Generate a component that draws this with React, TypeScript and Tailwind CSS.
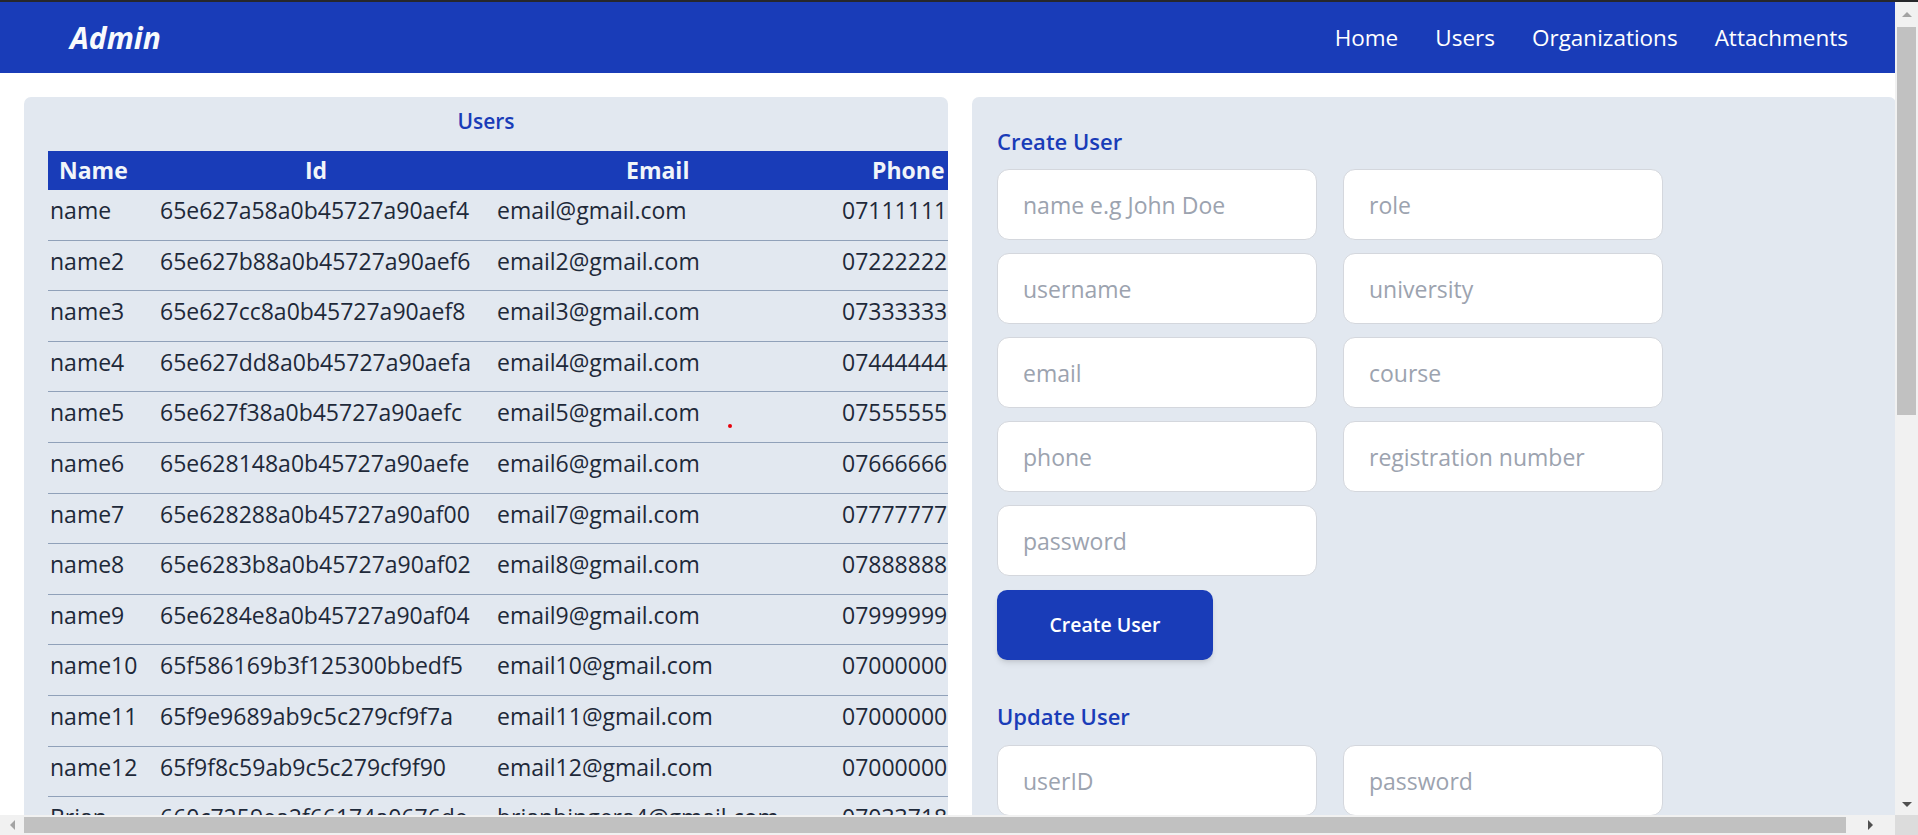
import React from 'react';

type User = { name: string; id: string; email: string; phone: string; role: string };

const USERS: User[] = [
  { name: 'name', id: '65e627a58a0b45727a90aef4', email: 'email@gmail.com', phone: '0711111111', role: 'student' },
  { name: 'name2', id: '65e627b88a0b45727a90aef6', email: 'email2@gmail.com', phone: '0722222222', role: 'student' },
  { name: 'name3', id: '65e627cc8a0b45727a90aef8', email: 'email3@gmail.com', phone: '0733333333', role: 'student' },
  { name: 'name4', id: '65e627dd8a0b45727a90aefa', email: 'email4@gmail.com', phone: '0744444444', role: 'student' },
  { name: 'name5', id: '65e627f38a0b45727a90aefc', email: 'email5@gmail.com', phone: '0755555555', role: 'student' },
  { name: 'name6', id: '65e628148a0b45727a90aefe', email: 'email6@gmail.com', phone: '0766666666', role: 'student' },
  { name: 'name7', id: '65e628288a0b45727a90af00', email: 'email7@gmail.com', phone: '0777777777', role: 'student' },
  { name: 'name8', id: '65e6283b8a0b45727a90af02', email: 'email8@gmail.com', phone: '0788888888', role: 'student' },
  { name: 'name9', id: '65e6284e8a0b45727a90af04', email: 'email9@gmail.com', phone: '0799999999', role: 'student' },
  { name: 'name10', id: '65f586169b3f125300bbedf5', email: 'email10@gmail.com', phone: '0700000010', role: 'student' },
  { name: 'name11', id: '65f9e9689ab9c5c279cf9f7a', email: 'email11@gmail.com', phone: '0700000011', role: 'student' },
  { name: 'name12', id: '65f9f8c59ab9c5c279cf9f90', email: 'email12@gmail.com', phone: '0700000012', role: 'student' },
  { name: 'Brian', id: '660c7259ea2f66174a0676de', email: 'brianbingera4@gmail.com', phone: '0703371812', role: 'admin' },
];

const NAV = ['Home', 'Users', 'Organizations', 'Attachments'];

const Field = ({ placeholder }: { placeholder: string }) => (
  <input
    placeholder={placeholder}
    className="h-[71px] w-[320px] rounded-[12px] border border-[#d4d7dd] bg-white px-[25px] text-[23px] text-gray-800 outline-none placeholder:text-[#9ca3af]"
  />
);

const Arrow = ({ dir, dark }: { dir: 'up' | 'down' | 'left' | 'right'; dark?: boolean }) => {
  const pts = {
    up: '0,6 5,1 10,6',
    down: '0,1 5,6 10,1',
    left: '6,0 1,5 6,10',
    right: '1,0 6,5 1,10',
  }[dir];
  const vertical = dir === 'up' || dir === 'down';
  return (
    <svg width={vertical ? 10 : 7} height={vertical ? 7 : 10} viewBox={vertical ? '0 0 10 7' : '0 0 7 10'}>
      <polygon points={pts} fill={dark ? '#505050' : '#a3a3a3'} />
    </svg>
  );
};

const App: React.FC = () => {
  return (
    <div className="flex h-screen w-full flex-col overflow-hidden bg-white font-['Open_Sans',sans-serif]">
      <div className="h-[2px] shrink-0 bg-[#26272b]" />
      <div className="flex min-h-0 flex-1">
        {/* page */}
        <div className="flex min-w-0 flex-1 flex-col overflow-hidden">
          <nav className="flex h-[71px] shrink-0 items-center justify-between bg-blue-800 pl-[70px] pr-[47px]">
            <h1 className="text-[30px] font-bold italic text-slate-50">Admin</h1>
            <ul className="flex gap-[37px]">
              {NAV.map(n => (
                <li key={n} className="text-[22.5px] text-white">{n}</li>
              ))}
            </ul>
          </nav>

          <main className="grid w-[1920px] shrink-0 grid-cols-2 gap-6 p-6">
            {/* users table */}
            <section className="relative overflow-hidden rounded-[7px] bg-slate-200 pt-[9px]">
              <h2 className="text-center text-[21px] font-semibold text-blue-800">Users</h2>
              <div className="mt-[13px] pl-[24px]">
                <table className="w-[1200px] table-fixed border-collapse text-[23px] text-gray-800">
                  <colgroup>
                    <col className="w-[110px]" />
                    <col className="w-[337px]" />
                    <col className="w-[345px]" />
                    <col className="w-[250px]" />
                    <col />
                  </colgroup>
                  <thead>
                    <tr className="h-[39px] bg-blue-800 text-slate-100">
                      <th className="pl-[11px] text-left font-bold">Name</th>
                      <th className="pl-[147px] text-left font-bold">Id</th>
                      <th className="pl-[131px] text-left font-bold">Email</th>
                      <th className="pl-[32px] text-left font-bold">Phone</th>
                      <th className="pl-[32px] text-left font-bold">Role</th>
                    </tr>
                  </thead>
                  <tbody>
                    {USERS.map(u => (
                      <tr key={u.id} className="border-b border-slate-400">
                        <td className="h-[50.6px] pb-[9px] pl-[2px] align-middle">{u.name}</td>
                        <td className="pb-[9px] pl-[2px] align-middle">{u.id}</td>
                        <td className="pb-[9px] pl-[2px] align-middle">{u.email}</td>
                        <td className="pb-[9px] pl-[2px] align-middle">{u.phone}</td>
                        <td className="pb-[9px] pl-[2px] align-middle">{u.role}</td>
                      </tr>
                    ))}
                  </tbody>
                </table>
              </div>
              <span className="absolute left-[704px] top-[327px] h-[4px] w-[4px] rounded-full bg-red-600" />
            </section>

            {/* forms */}
            <section className="rounded-[7px] bg-slate-200 pl-[25px] pt-[28px] pb-10">
              <h2 className="mb-[11px] text-[22px] font-semibold text-blue-800">Create User</h2>
              <div className="grid grid-cols-[320px_320px] gap-x-[26px] gap-y-[13px]">
                <Field placeholder="name e.g John Doe" />
                <Field placeholder="role" />
                <Field placeholder="username" />
                <Field placeholder="university" />
                <Field placeholder="email" />
                <Field placeholder="course" />
                <Field placeholder="phone" />
                <Field placeholder="registration number" />
                <Field placeholder="password" />
              </div>
              <button className="mt-[14px] h-[70px] w-[216px] rounded-[10px] bg-blue-800 text-[19.5px] font-semibold text-white shadow-md">
                Create User
              </button>

              <h2 className="mb-[12px] mt-[40px] text-[22px] font-semibold text-blue-800">Update User</h2>
              <div className="grid grid-cols-[320px_320px] gap-x-[26px] gap-y-[13px]">
                <Field placeholder="userID" />
                <Field placeholder="password" />
              </div>
              <button className="mt-[14px] h-[70px] w-[216px] rounded-[10px] bg-blue-800 text-[19.5px] font-semibold text-white shadow-md">
                Update User
              </button>
            </section>
          </main>
        </div>

        {/* vertical scrollbar */}
        <div className="flex w-[23px] shrink-0 flex-col items-center bg-[#f1f1f1]">
          <div className="flex h-[25px] items-center justify-center">
            <Arrow dir="up" />
          </div>
          <div className="h-[388px] w-[19px] bg-[#c1c1c1]" />
          <div className="flex-1" />
          <div className="flex h-[22px] items-center justify-center">
            <Arrow dir="down" dark />
          </div>
        </div>
      </div>

      {/* horizontal scrollbar */}
      <div className="flex h-[20px] shrink-0">
        <div className="flex flex-1 items-center bg-[#f1f1f1]">
          <div className="flex w-[24px] justify-center">
            <Arrow dir="left" />
          </div>
          <div className="my-[2px] h-[16px] w-[1822px] bg-[#c1c1c1]" />
          <div className="flex flex-1 justify-center">
            <Arrow dir="right" dark />
          </div>
        </div>
        <div className="w-[23px] bg-[#dcdcdc]" />
      </div>
    </div>
  );
};

export default App;
